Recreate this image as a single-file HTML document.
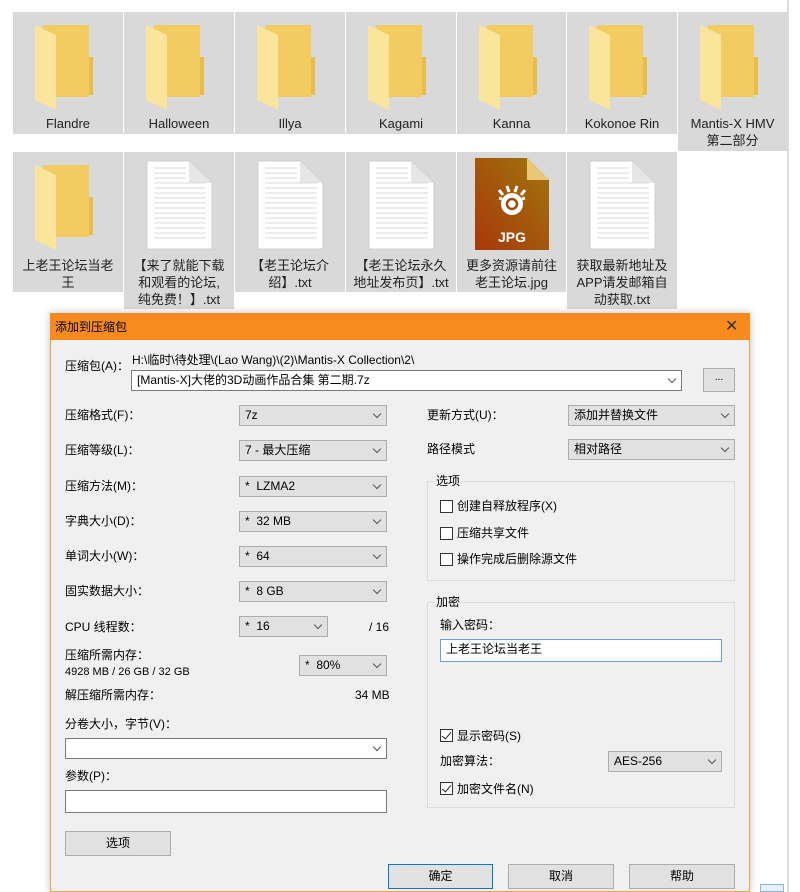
<!DOCTYPE html>
<html><head><meta charset="utf-8"><style>
*{margin:0;padding:0;box-sizing:border-box}
body{width:800px;height:892px;position:relative;background:#fff;overflow:hidden;font-family:"Liberation Sans","Noto Sans CJK SC",sans-serif;font-size:12px;color:#000}
.a{position:absolute}
.tile{position:absolute;background:#d9d9d9;text-align:center;font-size:13px;line-height:17px;color:#222}
.tile svg{position:absolute;left:0;top:0}
.tile .t{position:absolute;left:2px;right:2px}
.dd{position:absolute;background:#e1e1e1;border:1px solid #adadad;height:21px;font-size:12px;line-height:19px;padding-left:5px;color:#000}
.dd:after{content:"";position:absolute;right:6px;top:5px;width:5px;height:5px;border-right:1px solid #555;border-bottom:1px solid #555;transform:rotate(45deg)}
.dd.w{background:#fff;border-color:#7a7a7a}
.lb{position:absolute;font-size:12px;line-height:14px}
.btn{position:absolute;background:#e1e1e1;border:1px solid #adadad;text-align:center;line-height:22px;font-size:12px}
.cb{position:absolute;width:13px;height:13px;border:1px solid #333;background:#fff}
.cb.on:after{content:"";position:absolute;left:3px;top:0px;width:4px;height:8px;border-right:1px solid #222;border-bottom:1px solid #222;transform:rotate(40deg)}
.grp{position:absolute;border:1px solid #dcdcdc}
</style></head><body>
<div class="a" style="left:787px;top:0;width:2px;height:892px;background:#dcdcdc"></div>
<div class="a" style="left:760px;top:884px;width:24px;height:8px;border:1px solid #8ab4de;background:#e5f1fb"></div>

<!-- row 1 -->
<div class="tile" style="left:13px;top:12px;width:110px;height:122px"><svg width="110" height="100"><path d="M30 13h46v72H30z" fill="#f2cc60"/><path d="M76 45h4v38H76z" fill="#e9bd4c"/><path d="M22 13l21 10v75l-21-10z" fill="#fbe49b"/></svg><div class="t" style="top:103px">Flandre</div></div>
<div class="tile" style="left:124px;top:12px;width:110px;height:122px"><svg width="110" height="100"><path d="M30 13h46v72H30z" fill="#f2cc60"/><path d="M76 45h4v38H76z" fill="#e9bd4c"/><path d="M22 13l21 10v75l-21-10z" fill="#fbe49b"/></svg><div class="t" style="top:103px">Halloween</div></div>
<div class="tile" style="left:235px;top:12px;width:110px;height:122px"><svg width="110" height="100"><path d="M30 13h46v72H30z" fill="#f2cc60"/><path d="M76 45h4v38H76z" fill="#e9bd4c"/><path d="M22 13l21 10v75l-21-10z" fill="#fbe49b"/></svg><div class="t" style="top:103px">Illya</div></div>
<div class="tile" style="left:346px;top:12px;width:110px;height:122px"><svg width="110" height="100"><path d="M30 13h46v72H30z" fill="#f2cc60"/><path d="M76 45h4v38H76z" fill="#e9bd4c"/><path d="M22 13l21 10v75l-21-10z" fill="#fbe49b"/></svg><div class="t" style="top:103px">Kagami</div></div>
<div class="tile" style="left:457px;top:12px;width:109px;height:122px"><svg width="110" height="100"><path d="M30 13h46v72H30z" fill="#f2cc60"/><path d="M76 45h4v38H76z" fill="#e9bd4c"/><path d="M22 13l21 10v75l-21-10z" fill="#fbe49b"/></svg><div class="t" style="top:103px">Kanna</div></div>
<div class="tile" style="left:567px;top:12px;width:110px;height:122px"><svg width="110" height="100"><path d="M30 13h46v72H30z" fill="#f2cc60"/><path d="M76 45h4v38H76z" fill="#e9bd4c"/><path d="M22 13l21 10v75l-21-10z" fill="#fbe49b"/></svg><div class="t" style="top:103px">Kokonoe Rin</div></div>
<div class="tile" style="left:678px;top:12px;width:109px;height:139px"><svg width="110" height="100"><path d="M30 13h46v72H30z" fill="#f2cc60"/><path d="M76 45h4v38H76z" fill="#e9bd4c"/><path d="M22 13l21 10v75l-21-10z" fill="#fbe49b"/></svg><div class="t" style="top:103px">Mantis-X HMV<br>第二部分</div></div>

<!-- row 2 -->
<div class="tile" style="left:13px;top:152px;width:110px;height:140px"><svg width="110" height="100"><path d="M30 13h46v72H30z" fill="#f2cc60"/><path d="M76 45h4v38H76z" fill="#e9bd4c"/><path d="M22 13l21 10v75l-21-10z" fill="#fbe49b"/></svg><div class="t" style="top:105px">上老王论坛当老<br>王</div></div>
<div class="tile" style="left:124px;top:152px;width:110px;height:157px"><svg width="110" height="100"><path d="M23 9h42l23 22v66H23z" fill="#fff" stroke="#cfcfcf"/><path d="M65 9v22h23z" fill="#e6e6e6"/><path d="M30 16h32M30 21h32M30 26h32M30 31h52M30 36h52M30 41h52M30 46h52M30 51h52M30 56h52M30 61h52M30 66h52M30 71h52M30 76h52M30 81h52M30 86h52" stroke="#dadada"/></svg><div class="t" style="top:105px">【来了就能下载<br>和观看的论坛,<br>纯免费！】.txt</div></div>
<div class="tile" style="left:235px;top:152px;width:110px;height:140px"><svg width="110" height="100"><path d="M23 9h42l23 22v66H23z" fill="#fff" stroke="#cfcfcf"/><path d="M65 9v22h23z" fill="#e6e6e6"/><path d="M30 16h32M30 21h32M30 26h32M30 31h52M30 36h52M30 41h52M30 46h52M30 51h52M30 56h52M30 61h52M30 66h52M30 71h52M30 76h52M30 81h52M30 86h52" stroke="#dadada"/></svg><div class="t" style="top:105px">【老王论坛介<br>绍】.txt</div></div>
<div class="tile" style="left:346px;top:152px;width:110px;height:140px"><svg width="110" height="100"><path d="M23 9h42l23 22v66H23z" fill="#fff" stroke="#cfcfcf"/><path d="M65 9v22h23z" fill="#e6e6e6"/><path d="M30 16h32M30 21h32M30 26h32M30 31h52M30 36h52M30 41h52M30 46h52M30 51h52M30 56h52M30 61h52M30 66h52M30 71h52M30 76h52M30 81h52M30 86h52" stroke="#dadada"/></svg><div class="t" style="top:105px">【老王论坛永久<br>地址发布页】.txt</div></div>
<div class="tile" style="left:457px;top:152px;width:109px;height:140px"><svg width="110" height="100"><defs><linearGradient id="g" x1="0" y1="1" x2="1" y2="0"><stop offset="0" stop-color="#a8380a"/><stop offset="1" stop-color="#a0760e"/></linearGradient></defs><path d="M18 6h52l22 22v70H18z" fill="url(#g)"/><path d="M70 6v22h22z" fill="#e8c878"/><circle cx="55" cy="52" r="11" fill="#fff"/><circle cx="55" cy="52" r="5" fill="none" stroke="#a04a10" stroke-width="2.5"/><path d="M42 38l4 5M50 34l2 6M60 34l-2 6M68 38l-4 5M42 46l3 1M68 46l-3 1" stroke="#fff" stroke-width="3"/><text x="55" y="90" text-anchor="middle" fill="#fff" font-size="14" font-weight="bold" font-family="Liberation Sans">JPG</text></svg><div class="t" style="top:105px">更多资源请前往<br>老王论坛.jpg</div></div>
<div class="tile" style="left:567px;top:152px;width:110px;height:157px"><svg width="110" height="100"><path d="M23 9h42l23 22v66H23z" fill="#fff" stroke="#cfcfcf"/><path d="M65 9v22h23z" fill="#e6e6e6"/><path d="M30 16h32M30 21h32M30 26h32M30 31h52M30 36h52M30 41h52M30 46h52M30 51h52M30 56h52M30 61h52M30 66h52M30 71h52M30 76h52M30 81h52M30 86h52" stroke="#dadada"/></svg><div class="t" style="top:105px">获取最新地址及<br>APP请发邮箱自<br>动获取.txt</div></div>

<!-- dialog -->
<div class="a" style="left:50px;top:313px;width:700px;height:579px;background:#f0f0f0;border:1px solid #f5a050;border-top:none;box-shadow:0 0 8px rgba(0,0,0,.25)"></div>
<div class="a" style="left:50px;top:313px;width:700px;height:27px;background:#f88a1e"></div>
<div class="lb" style="left:55px;top:320px;font-size:12px">添加到压缩包</div>
<div class="lb" style="left:725px;top:318px;font-size:16px;line-height:18px;color:#333">✕</div>

<div class="lb" style="left:65px;top:359px">压缩包(A)：</div>
<div class="lb" style="left:132px;top:353px">H:\临时\待处理\(Lao Wang)\(2)\Mantis-X Collection\2\</div>
<div class="dd w" style="left:131px;top:370px;width:551px;height:21px">[Mantis-X]大佬的3D动画作品合集 第二期.7z</div>
<div class="btn" style="left:703px;top:368px;width:32px;height:24px;line-height:18px;font-size:10px">...</div>

<div class="lb" style="left:65px;top:408px">压缩格式(F)：</div><div class="dd" style="left:239px;top:405px;width:148px">7z</div>
<div class="lb" style="left:65px;top:443px">压缩等级(L)：</div><div class="dd" style="left:239px;top:440px;width:148px">7 - 最大压缩</div>
<div class="lb" style="left:65px;top:479px">压缩方法(M)：</div><div class="dd" style="left:239px;top:476px;width:148px">*&nbsp; LZMA2</div>
<div class="lb" style="left:65px;top:514px">字典大小(D)：</div><div class="dd" style="left:239px;top:511px;width:148px">*&nbsp; 32 MB</div>
<div class="lb" style="left:65px;top:549px">单词大小(W)：</div><div class="dd" style="left:239px;top:546px;width:148px">*&nbsp; 64</div>
<div class="lb" style="left:65px;top:584px">固实数据大小：</div><div class="dd" style="left:239px;top:581px;width:148px">*&nbsp; 8 GB</div>
<div class="lb" style="left:65px;top:620px">CPU 线程数：</div><div class="dd" style="left:239px;top:616px;width:89px">*&nbsp; 16</div><div class="lb" style="left:369px;top:620px">/ 16</div>
<div class="lb" style="left:65px;top:648px">压缩所需内存：</div><div class="lb" style="left:65px;top:665px;font-size:11px">4928 MB / 26 GB / 32 GB</div>
<div class="dd" style="left:299px;top:655px;width:88px">*&nbsp; 80%</div>
<div class="lb" style="left:65px;top:688px">解压缩所需内存：</div><div class="lb" style="left:355px;top:688px">34 MB</div>
<div class="lb" style="left:65px;top:717px">分卷大小，字节(V)：</div>
<div class="dd w" style="left:65px;top:738px;width:322px"></div>
<div class="lb" style="left:65px;top:769px">参数(P)：</div>
<div class="a" style="left:65px;top:790px;width:322px;height:23px;background:#fff;border:1px solid #7a7a7a"></div>
<div class="btn" style="left:65px;top:831px;width:106px;height:25px">选项</div>

<div class="lb" style="left:427px;top:408px">更新方式(U)：</div><div class="dd" style="left:568px;top:405px;width:167px">添加并替换文件</div>
<div class="lb" style="left:427px;top:442px">路径模式</div><div class="dd" style="left:568px;top:439px;width:167px">相对路径</div>

<div class="grp" style="left:427px;top:481px;width:308px;height:100px"></div>
<div class="lb" style="left:434px;top:474px;background:#f0f0f0;padding:0 2px">选项</div>
<div class="cb" style="left:440px;top:500px"></div><div class="lb" style="left:457px;top:499px">创建自释放程序(X)</div>
<div class="cb" style="left:440px;top:527px"></div><div class="lb" style="left:457px;top:526px">压缩共享文件</div>
<div class="cb" style="left:440px;top:553px"></div><div class="lb" style="left:457px;top:552px">操作完成后删除源文件</div>

<div class="grp" style="left:427px;top:602px;width:308px;height:206px"></div>
<div class="lb" style="left:434px;top:595px;background:#f0f0f0;padding:0 2px">加密</div>
<div class="lb" style="left:440px;top:618px">输入密码：</div>
<div class="a" style="left:440px;top:639px;width:282px;height:23px;background:#fff;border:1px solid #6aa0d8;padding-left:5px;line-height:18px;font-size:12px">上老王论坛当老王</div>
<div class="cb on" style="left:440px;top:729px"></div><div class="lb" style="left:457px;top:729px">显示密码(S)</div>
<div class="lb" style="left:440px;top:754px">加密算法：</div><div class="dd" style="left:608px;top:751px;width:114px">AES-256</div>
<div class="cb on" style="left:440px;top:782px"></div><div class="lb" style="left:457px;top:782px">加密文件名(N)</div>

<div class="btn" style="left:388px;top:864px;width:105px;height:25px;border:1px solid #0078d7">确定</div>
<div class="btn" style="left:508px;top:864px;width:106px;height:25px">取消</div>
<div class="btn" style="left:629px;top:864px;width:106px;height:25px">帮助</div>
</body></html>
